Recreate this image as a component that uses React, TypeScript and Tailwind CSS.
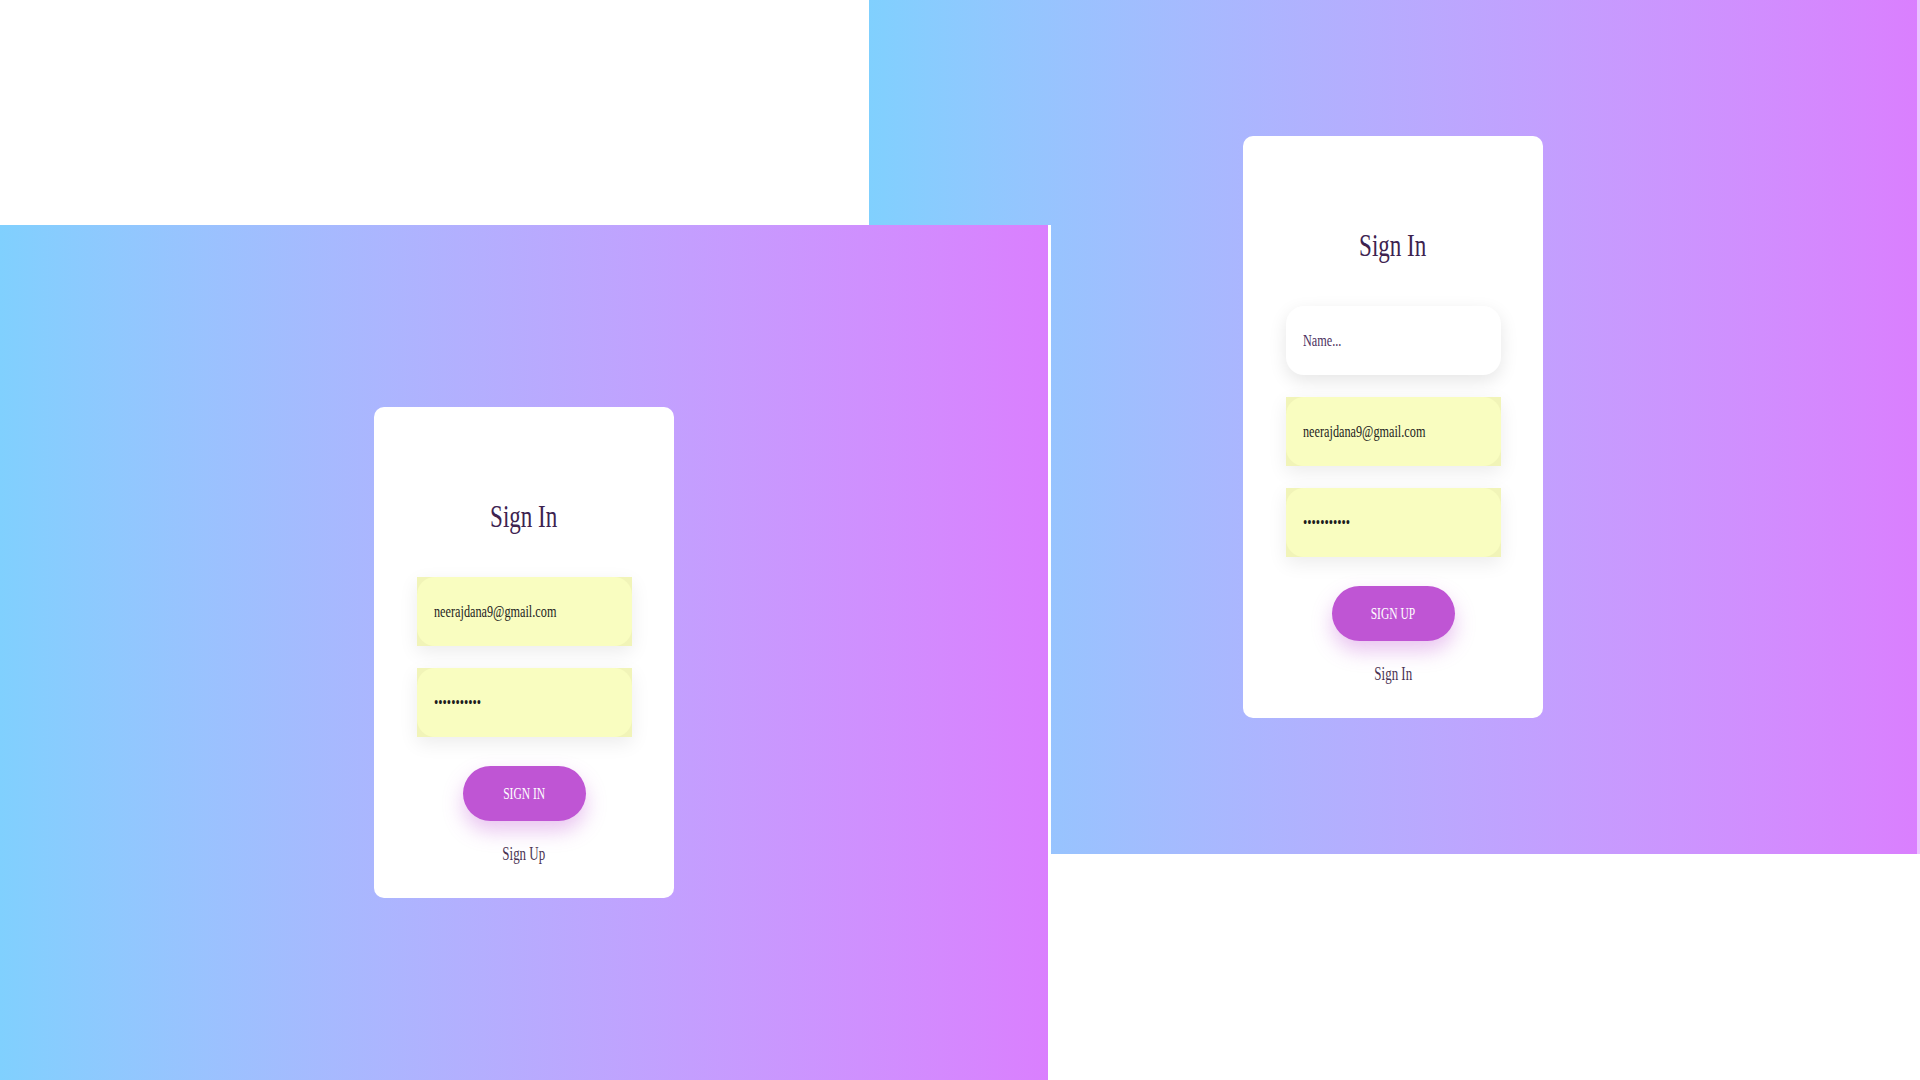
import React from "react";

const serif = { fontFamily: '"Liberation Serif", "Times New Roman", serif' };

// text in the shot is squeezed sideways, so every label gets the same squeeze
const Squeeze = ({ children, left }: { children: React.ReactNode; left?: boolean }) => (
  <span className={`inline-block scale-x-[0.72] whitespace-nowrap ${left ? "origin-left" : "origin-center"}`}>
    {children}
  </span>
);

const Field = ({ value, placeholder, filled }: { value?: string; placeholder?: string; filled?: boolean }) => {
  if (!filled) {
    return (
      <div className="flex h-[69px] w-[215px] items-center rounded-[18px] bg-white pl-[17px] text-[17px] text-[#4b2f5e] shadow-[0_6px_18px_rgba(0,0,0,0.1)]">
        <Squeeze left>{placeholder}</Squeeze>
      </div>
    );
  }
  return (
    <div className="h-[69px] w-[215px] bg-[#f1f4b8] shadow-[0_6px_18px_rgba(0,0,0,0.08)]">
      <div className="flex h-full items-center rounded-[18px] bg-[#f9fdc0] pl-[17px] text-[17px] text-[#1e1e1e]">
        <Squeeze left>{value}</Squeeze>
      </div>
    </div>
  );
};

const AuthCard = ({ withName, button, link }: { withName?: boolean; button: string; link: string }) => {
  return (
    <div className="flex w-[300px] flex-col items-center rounded-[10px] bg-white pt-[89px] pb-[32px]" style={serif}>
      <h1 className="h-10 text-[32px] leading-10 text-[#3d2350]">
        <Squeeze>Sign In</Squeeze>
      </h1>
      <div className="mt-[41px] flex flex-col gap-[22px]">
        {withName && <Field placeholder="Name..." />}
        <Field filled value="neerajdana9@gmail.com" />
        <Field filled value="•••••••••••" />
      </div>
      <button className="mt-[29px] flex h-[55px] w-[123px] items-center justify-center rounded-full bg-[#bf55d4] text-[16px] text-white shadow-[0_10px_20px_rgba(191,85,212,0.35)]">
        <Squeeze>{button}</Squeeze>
      </button>
      <a className="mt-[21px] h-6 text-[18px] leading-6 text-[#4a3352]">
        <Squeeze>{link}</Squeeze>
      </a>
    </div>
  );
};

export default function App() {
  return (
    <div className="grid h-[1080px] w-[1920px] grid-cols-[869px_182px_1fr] grid-rows-[225px_629px_1fr] overflow-hidden bg-white">
      {/* sign up screen, sits behind */}
      <div className="col-start-2 col-end-4 row-start-1 row-end-3 flex items-center justify-center border-r-[3px] border-[#ecc2ff] bg-linear-to-r from-[#80d0fe] to-[#da7ffe]">
        <AuthCard withName button="SIGN UP" link="Sign In" />
      </div>

      {/* sign in screen, on top */}
      <div className="z-10 col-start-1 col-end-3 row-start-2 row-end-4 flex items-center justify-center border-r-[3px] border-white bg-linear-to-r from-[#80d0fe] to-[#da7ffe]">
        <AuthCard button="SIGN IN" link="Sign Up" />
      </div>
    </div>
  );
}
